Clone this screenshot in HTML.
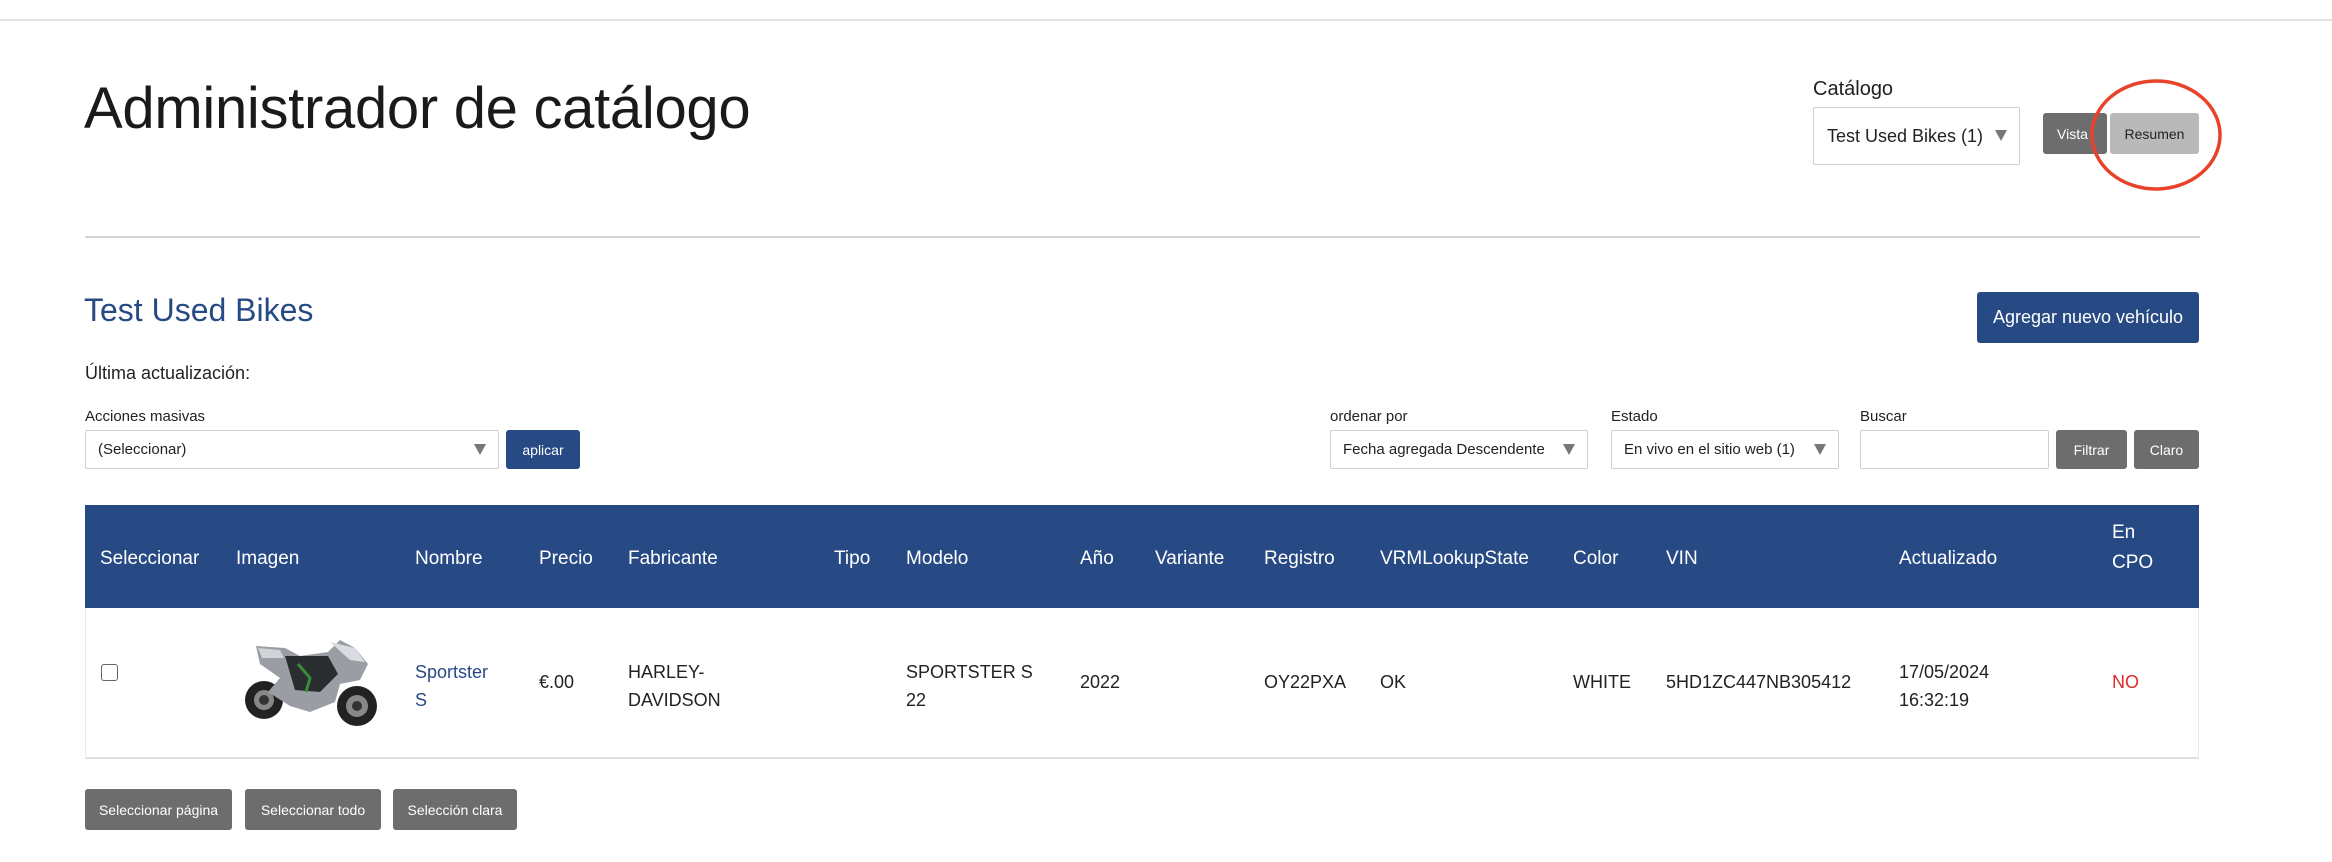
<!DOCTYPE html>
<html><head><meta charset="utf-8">
<style>
*{margin:0;padding:0;box-sizing:border-box}
body{width:2332px;height:862px;background:#fff;position:relative;overflow:hidden;font-family:"Liberation Sans",sans-serif;color:#222}
.a{position:absolute;white-space:nowrap}
.sel{position:absolute;border:1px solid #cfcfcf;border-radius:2px;background:#fff;font-size:15px;color:#222;display:flex;align-items:center;padding-left:12px}
.sel:after{content:"";position:absolute;right:12px;top:50%;margin-top:-6px;border-left:6px solid transparent;border-right:6px solid transparent;border-top:11px solid #777}
.nosel:after{display:none}
.btn{position:absolute;border-radius:3px;color:#fff;display:flex;align-items:center;justify-content:center;font-size:14px}
.th{position:absolute;color:#fff;font-size:19px;top:548px}
.td{position:absolute;font-size:18px;color:#222}
</style></head><body>
<div class="a" style="left:0;top:19px;width:2332px;height:2px;background:#e2e2e2"></div>
<div class="a" style="left:84px;top:74px;font-size:58px;line-height:70px;color:#1a1a1a;letter-spacing:-0.3px">Administrador de catálogo</div>

<div class="a" style="left:1813px;top:78px;font-size:20px">Catálogo</div>
<div class="sel" style="left:1813px;top:107px;width:207px;height:58px;font-size:18px;padding-left:13px">Test Used Bikes (1)</div>
<div class="btn" style="left:2043px;top:113px;width:64px;height:41px;background:#6d6d6d;justify-content:flex-start;padding-left:14px">Vista</div>
<div class="btn" style="left:2110px;top:113px;width:89px;height:41px;background:#b9b9b9;color:#222">Resumen</div>
<svg class="a" style="left:2080px;top:70px" width="150" height="130"><ellipse cx="76" cy="65" rx="64" ry="54" fill="none" stroke="#e8432a" stroke-width="3.5"/></svg>

<div class="a" style="left:85px;top:236px;width:2115px;height:2px;background:#d4d4d4"></div>

<div class="a" style="left:84px;top:292px;font-size:32px;color:#284a84">Test Used Bikes</div>
<div class="btn" style="left:1977px;top:292px;width:222px;height:51px;background:#284a84;font-size:18px">Agregar nuevo vehículo</div>

<div class="a" style="left:85px;top:363px;font-size:18px">Última actualización:</div>
<div class="a" style="left:85px;top:408px;font-size:15px">Acciones masivas</div>
<div class="sel" style="left:85px;top:430px;width:414px;height:39px">(Seleccionar)</div>
<div class="btn" style="left:506px;top:430px;width:74px;height:39px;background:#284a84">aplicar</div>

<div class="a" style="left:1330px;top:408px;font-size:15px">ordenar por</div>
<div class="sel" style="left:1330px;top:430px;width:258px;height:39px">Fecha agregada Descendente</div>
<div class="a" style="left:1611px;top:408px;font-size:15px">Estado</div>
<div class="sel" style="left:1611px;top:430px;width:228px;height:39px">En vivo en el sitio web (1)</div>
<div class="a" style="left:1860px;top:408px;font-size:15px">Buscar</div>
<div class="sel nosel" style="left:1860px;top:430px;width:189px;height:39px;padding:0"></div>
<div class="btn" style="left:2056px;top:430px;width:71px;height:39px;background:#6d6d6d">Filtrar</div>
<div class="btn" style="left:2134px;top:430px;width:65px;height:39px;background:#6d6d6d">Claro</div>

<div class="a" style="left:85px;top:505px;width:2114px;height:103px;background:#284a84"></div>
<div class="th" style="left:100px">Seleccionar</div>
<div class="th" style="left:236px">Imagen</div>
<div class="th" style="left:415px">Nombre</div>
<div class="th" style="left:539px">Precio</div>
<div class="th" style="left:628px">Fabricante</div>
<div class="th" style="left:834px">Tipo</div>
<div class="th" style="left:906px">Modelo</div>
<div class="th" style="left:1080px">Año</div>
<div class="th" style="left:1155px">Variante</div>
<div class="th" style="left:1264px">Registro</div>
<div class="th" style="left:1380px">VRMLookupState</div>
<div class="th" style="left:1573px">Color</div>
<div class="th" style="left:1666px">VIN</div>
<div class="th" style="left:1899px">Actualizado</div>
<div class="th" style="left:2112px;top:518px;line-height:30px">En<br>CPO</div>

<div class="a" style="left:85px;top:608px;width:2114px;height:151px;border:1px solid #ececec;border-top:none;border-bottom:2px solid #e0e0e0"></div>
<div class="a" style="left:101px;top:664px;width:17px;height:17px;border:1.5px solid #666;border-radius:3px;background:#fff"></div>
<svg class="a" style="left:240px;top:634px" width="145" height="100" viewBox="0 0 145 100">
<circle cx="24" cy="66" r="19" fill="#222"/><circle cx="24" cy="66" r="10" fill="#888"/><circle cx="24" cy="66" r="5" fill="#333"/>
<circle cx="117" cy="72" r="20" fill="#222"/><circle cx="117" cy="72" r="11" fill="#888"/><circle cx="117" cy="72" r="5" fill="#333"/>
<path d="M16 12 L45 14 L60 22 L88 18 L100 6 L115 14 L128 30 L120 46 L100 50 L95 68 L70 78 L50 72 L28 58 L40 44 L20 30 Z" fill="#9a9ea4"/>
<path d="M45 22 L88 22 L98 40 L80 58 L55 56 Z" fill="#2a2d30"/>
<path d="M58 30 L70 44 L66 58" stroke="#3b8a3a" stroke-width="3" fill="none"/>
<path d="M90 8 L115 14 L125 28 L110 26 Z" fill="#d9dde2"/>
<path d="M18 14 L40 16 L44 24 L22 24 Z" fill="#d0d4d8"/>
</svg>
<div class="td" style="left:415px;top:658px;line-height:28px;color:#284a84">Sportster<br>S</div>
<div class="td" style="left:539px;top:672px">€.00</div>
<div class="td" style="left:628px;top:658px;line-height:28px">HARLEY-<br>DAVIDSON</div>
<div class="td" style="left:906px;top:658px;line-height:28px">SPORTSTER S<br>22</div>
<div class="td" style="left:1080px;top:672px">2022</div>
<div class="td" style="left:1264px;top:672px">OY22PXA</div>
<div class="td" style="left:1380px;top:672px">OK</div>
<div class="td" style="left:1573px;top:672px">WHITE</div>
<div class="td" style="left:1666px;top:672px">5HD1ZC447NB305412</div>
<div class="td" style="left:1899px;top:658px;line-height:28px">17/05/2024<br>16:32:19</div>
<div class="td" style="left:2112px;top:672px;color:#e02a2a">NO</div>

<div class="btn" style="left:85px;top:789px;width:147px;height:41px;background:#6d6d6d">Seleccionar página</div>
<div class="btn" style="left:245px;top:789px;width:136px;height:41px;background:#6d6d6d">Seleccionar todo</div>
<div class="btn" style="left:393px;top:789px;width:124px;height:41px;background:#6d6d6d">Selección clara</div>
</body></html>
